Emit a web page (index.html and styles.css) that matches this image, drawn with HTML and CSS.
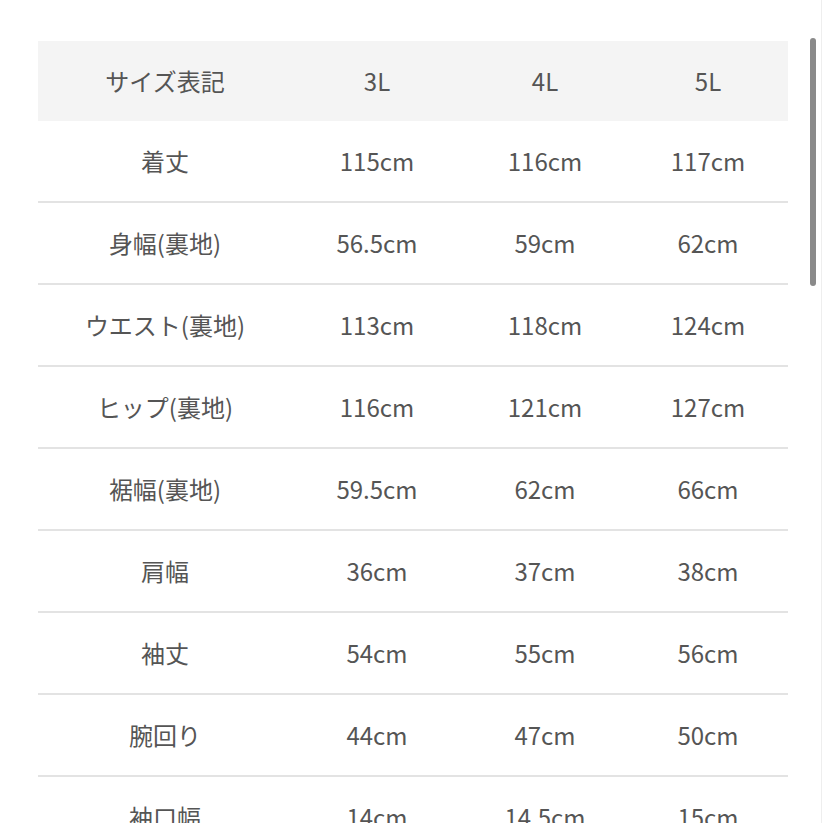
FILE: index.html
```html
<!DOCTYPE html>
<html lang="ja">
<head>
<meta charset="utf-8">
<link rel="stylesheet" href="styles.css">
</head>
<body>
<div class="page">
  <div class="table">
    <div class="row head">
      <div class="cell">サイズ表記</div><div class="cell">3L</div><div class="cell">4L</div><div class="cell">5L</div>
    </div>
    <div class="row"><div class="cell">着丈</div><div class="cell">115cm</div><div class="cell">116cm</div><div class="cell">117cm</div></div>
    <div class="row"><div class="cell">身幅(裏地)</div><div class="cell">56.5cm</div><div class="cell">59cm</div><div class="cell">62cm</div></div>
    <div class="row"><div class="cell">ウエスト(裏地)</div><div class="cell">113cm</div><div class="cell">118cm</div><div class="cell">124cm</div></div>
    <div class="row"><div class="cell">ヒップ(裏地)</div><div class="cell">116cm</div><div class="cell">121cm</div><div class="cell">127cm</div></div>
    <div class="row"><div class="cell">裾幅(裏地)</div><div class="cell">59.5cm</div><div class="cell">62cm</div><div class="cell">66cm</div></div>
    <div class="row"><div class="cell">肩幅</div><div class="cell">36cm</div><div class="cell">37cm</div><div class="cell">38cm</div></div>
    <div class="row"><div class="cell">袖丈</div><div class="cell">54cm</div><div class="cell">55cm</div><div class="cell">56cm</div></div>
    <div class="row"><div class="cell">腕回り</div><div class="cell">44cm</div><div class="cell">47cm</div><div class="cell">50cm</div></div>
    <div class="row"><div class="cell">袖口幅</div><div class="cell">14cm</div><div class="cell">14.5cm</div><div class="cell">15cm</div></div>
  </div>
  <div class="scroll-track"><div class="scroll-thumb"></div></div>
</div>
</body>
</html>
```
FILE: styles.css
```css
html, body {
  margin: 0;
  padding: 0;
  background: #ffffff;
  overflow: hidden;
  height: 823px;
}
.page {
  position: relative;
  padding: 41px 35px 0 38px;
  font-family: "Noto Sans CJK JP", "Noto Sans", sans-serif;
  color: #555555;
}
.table {
  width: 750px;
}
.row {
  display: grid;
  grid-template-columns: 254px 170px 166px 160px;
  height: 80px;
  border-bottom: 2px solid #e3e3e3;
  align-items: center;
}
.row.head {
  background: #f4f4f4;
  border-bottom: none;
}
.cell {
  text-align: center;
  font-size: 24px;
  line-height: 1;
}
.scroll-track {
  position: absolute;
  top: 0;
  right: 0;
  width: 1px;
  height: 823px;
  border-left: 1px solid #eeeeee;
}
.scroll-thumb {
  position: absolute;
  top: 38px;
  left: -12px;
  width: 6px;
  height: 248px;
  border-radius: 3px;
  background: #8a8a8a;
}
```
